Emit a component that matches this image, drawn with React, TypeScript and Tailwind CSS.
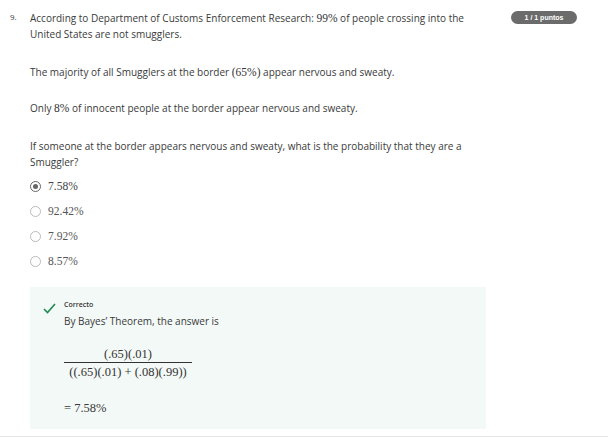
import React from 'react';

const M = ({ children }: { children: React.ReactNode }) => (
  <span className="font-['Liberation_Serif',serif] text-[11.5px] leading-[14px] text-[#333]">{children}</span>
);

const options = ['7.58%', '92.42%', '7.92%', '8.57%'];

const Radio = ({ checked }: { checked: boolean }) => (
  <span
    className={
      'flex h-[11px] w-[11px] shrink-0 items-center justify-center rounded-full border ' +
      (checked ? 'border-[#666]' : 'border-[#bbb]')
    }
  >
    {checked && <span className="h-[5px] w-[5px] rounded-full bg-[#666]" />}
  </span>
);

export default function App() {
  return (
    <div className="h-[437px] w-[608px] bg-white font-['Open_Sans',sans-serif] text-[10px] leading-[16px] text-[#3a3a3a]">
      <div className="flex h-[436px] pl-[10px] pt-[10px]">
        <div className="w-[20px] pt-[1px] text-[8px] leading-[12px]">9.</div>
        <div className="flex w-[456px] flex-col">
          <p>
            According to Department of Customs Enforcement Research: <M>99%</M> of people crossing into the
            United States are not smugglers.
          </p>
          <p className="mt-[22px]">
            The majority of all Smugglers at the border <M>(65%)</M> appear nervous and sweaty.
          </p>
          <p className="mt-[20px]">
            Only <M>8%</M> of innocent people at the border appear nervous and sweaty.
          </p>
          <p className="mt-[22px]">
            If someone at the border appears nervous and sweaty, what is the probability that they are a
            Smuggler?
          </p>
          <div className="mt-[8px] flex flex-col gap-[9px]">
            {options.map((o, i) => (
              <div key={o} className="flex h-[16px] items-center gap-[7px]">
                <Radio checked={i === 0} />
                <span
                  className={
                    "font-['Liberation_Serif',serif] text-[11.5px] " + (i === 0 ? 'text-[#444]' : 'text-[#555]')
                  }
                >
                  {o}
                </span>
              </div>
            ))}
          </div>
          <div className="mt-[18px] flex h-[142px] gap-[8px] bg-[#f3f9f7] pl-[13px] pt-[12px]">
            <svg width="13" height="11" viewBox="0 0 13 11" className="mt-[4px] shrink-0">
              <path d="M1 6 L4.5 9.5 L12 1" fill="none" stroke="#1e8a4f" strokeWidth="1.6" />
            </svg>
            <div className="flex flex-col">
              <div className="text-[7px] font-semibold leading-[12px] text-[#333]">Correcto</div>
              <div className="mt-[3px] leading-[14px]">By Bayes&#8217; Theorem, the answer is</div>
              <div className="mt-[19px] flex w-[128px] flex-col items-center font-['Liberation_Serif',serif] text-[12.5px] leading-[14px] text-[#333]">
                <span>(.65)(.01)</span>
                <span className="mt-[1px] h-px w-full bg-[#333]" />
                <span className="mt-[2px]">((.65)(.01) + (.08)(.99))</span>
              </div>
              <div className="mt-[22px] font-['Liberation_Serif',serif] text-[12.5px] leading-[14px]">= 7.58%</div>
            </div>
          </div>
        </div>
        <div className="ml-[25px] pt-[1px]">
          <div className="flex h-[13px] w-[66px] items-center justify-center rounded-full bg-[#6b6b6b] font-['Liberation_Sans',sans-serif] text-[7px] font-bold text-white">
            1 / 1 puntos
          </div>
        </div>
      </div>
      <div className="h-px w-full bg-[#e6e6e6]" />
    </div>
  );
}
